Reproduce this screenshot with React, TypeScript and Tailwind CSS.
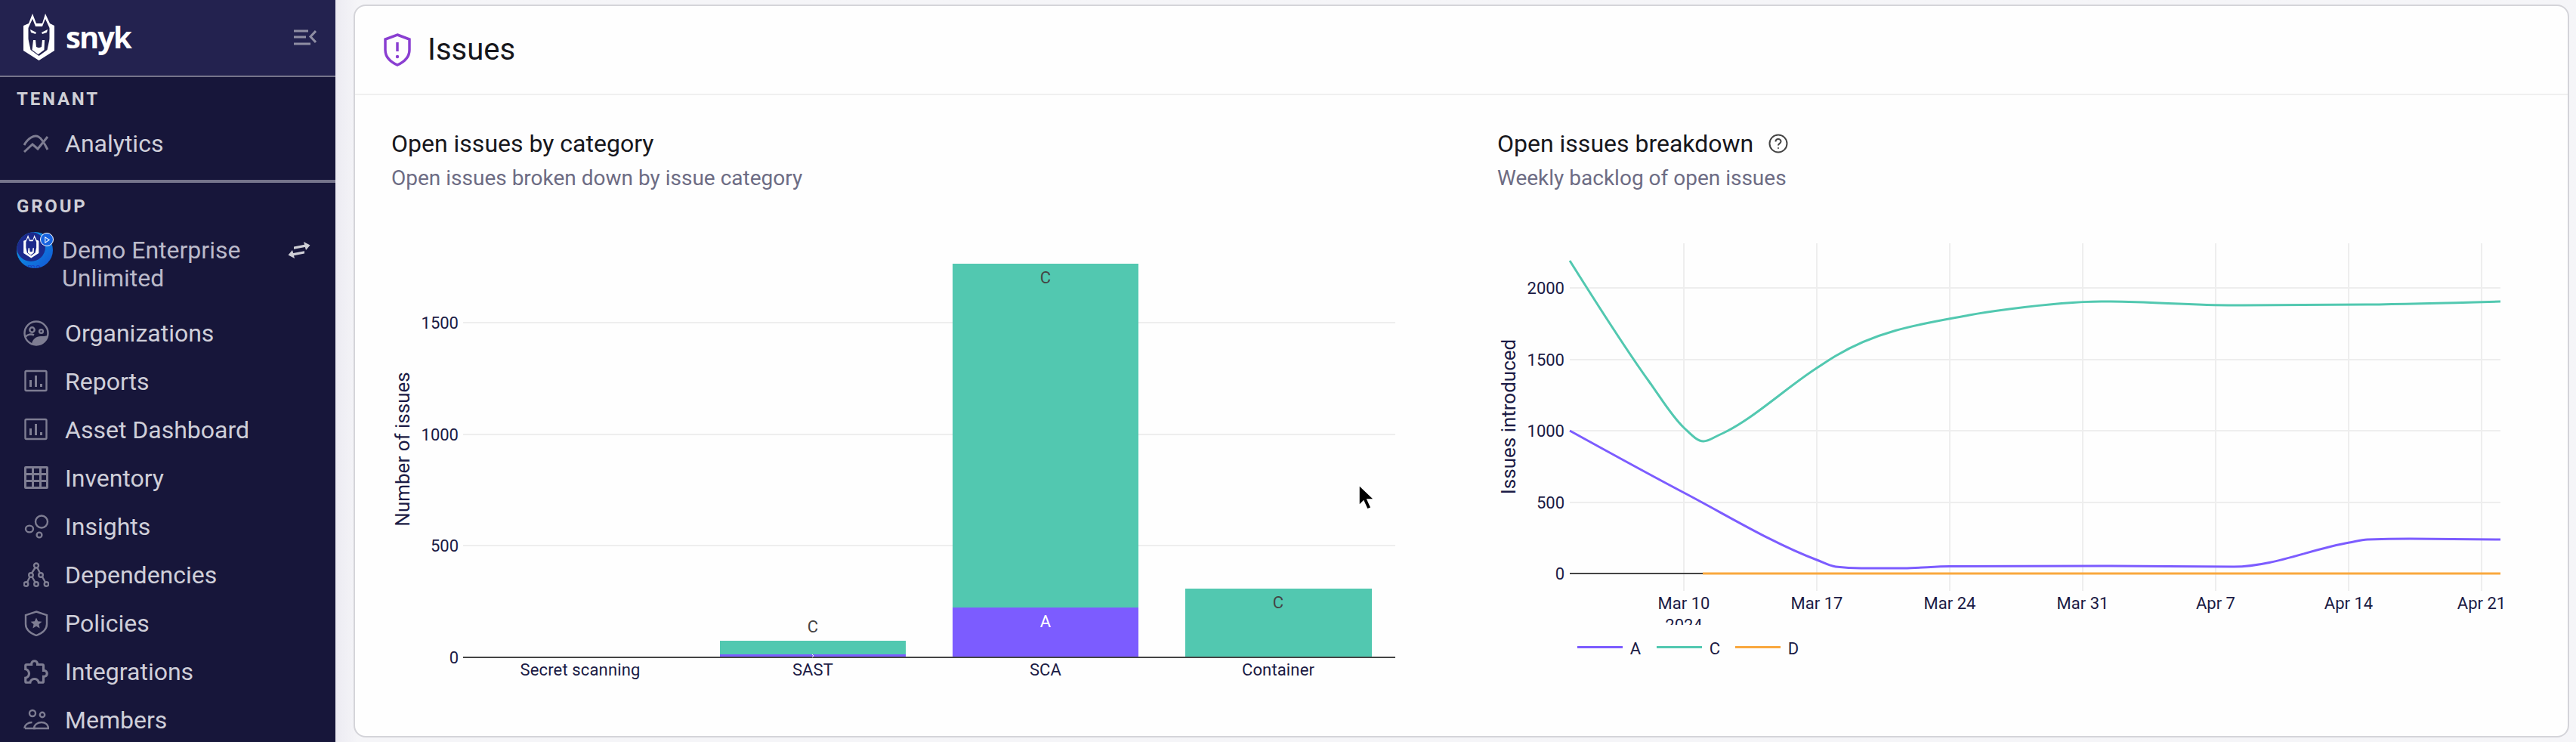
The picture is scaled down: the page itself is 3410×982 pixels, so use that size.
const TICK = "#1b1b45";
const GRID = "#eeeeee";
const AXIS = "#444444";
const PURPLE = "#7c5cff";
const TEAL = "#52c8b0";
const ORANGE = "#f9a83e";

type Pt = [number, number];

// same maths as d3 curveMonotoneX
function monotonePath(pts: Pt[]) {
  const n = pts.length;
  const slopes: number[] = [];
  for (let i = 0; i < n - 1; i++) {
    slopes.push((pts[i + 1][1] - pts[i][1]) / (pts[i + 1][0] - pts[i][0]));
  }
  const t: number[] = [];
  for (let i = 1; i < n - 1; i++) {
    const a = slopes[i - 1];
    const b = slopes[i];
    const ha = pts[i][0] - pts[i - 1][0];
    const hb = pts[i + 1][0] - pts[i][0];
    if (a * b <= 0) t[i] = 0;
    else {
      const p = (a * hb + b * ha) / (ha + hb);
      t[i] = (Math.sign(a) + Math.sign(b)) * Math.min(Math.abs(a), Math.abs(b), 0.5 * Math.abs(p));
    }
  }
  t[0] = (3 * slopes[0] - t[1]) / 2;
  t[n - 1] = (3 * slopes[n - 2] - t[n - 2]) / 2;
  let d = `M${pts[0][0]},${pts[0][1]}`;
  for (let i = 0; i < n - 1; i++) {
    const dx = (pts[i + 1][0] - pts[i][0]) / 3;
    d += `C${pts[i][0] + dx},${pts[i][1] + dx * t[i]} ${pts[i + 1][0] - dx},${pts[i + 1][1] - dx * t[i + 1]} ${pts[i + 1][0]},${pts[i + 1][1]}`;
  }
  return d;
}

const navItems = [
  { label: "Organizations", icon: <OrgIcon /> },
  { label: "Reports", icon: <ChartBoxIcon /> },
  { label: "Asset Dashboard", icon: <ChartBoxIcon /> },
  { label: "Inventory", icon: <TableIcon /> },
  { label: "Insights", icon: <InsightsIcon /> },
  { label: "Dependencies", icon: <DepsIcon /> },
  { label: "Policies", icon: <PolicyIcon /> },
  { label: "Integrations", icon: <PuzzleIcon /> },
  { label: "Members", icon: <MembersIcon /> },
];

function IconBox({ children }: { children: React.ReactNode }) {
  return (
    <svg viewBox="0 0 34 34" className="w-[34px] h-[34px] shrink-0 text-[#7e7d92]" fill="none" stroke="currentColor" strokeWidth="2.4">
      {children}
    </svg>
  );
}

function OrgIcon() {
  return (
    <IconBox>
      <circle cx="17" cy="17" r="15.5" />
      <circle cx="11.5" cy="12.5" r="3.2" />
      <circle cx="23.5" cy="14.5" r="2.4" />
      <path d="M2.5 22c3-3.5 8-4.5 11.5-2.5" />
      <path d="M11 31c1-6 6-10 12-10 3 0 6 0 9-1-1 6-5 12-14 13z" fill="currentColor" stroke="none" />
    </IconBox>
  );
}

function ChartBoxIcon() {
  return (
    <IconBox>
      <rect x="2.5" y="3" width="28" height="26" rx="1.5" />
      <path d="M9.5 24v-9M16.5 24V9M23.5 24v-4" strokeWidth="3" />
    </IconBox>
  );
}

function TableIcon() {
  return (
    <IconBox>
      <path
        fill="currentColor"
        stroke="none"
        fillRule="evenodd"
        d="M3 1h28a2 2 0 0 1 2 2v26a2 2 0 0 1-2 2H3a2 2 0 0 1-2-2V3a2 2 0 0 1 2-2zM4 4v6h7V4zM14 4v6h7V4zM24 4v6h6V4zM4 13v6h7v-6zM14 13v6h7v-6zM24 13v6h6v-6zM4 22v6h7v-6zM14 22v6h7v-6zM24 22v6h6v-6z"
      />
    </IconBox>
  );
}

function InsightsIcon() {
  return (
    <IconBox>
      <circle cx="24" cy="10.5" r="8" />
      <ellipse cx="8" cy="20" rx="5" ry="4.4" />
      <circle cx="21" cy="28" r="3.4" />
    </IconBox>
  );
}

function DepsIcon() {
  return (
    <IconBox>
      <circle cx="17" cy="4.5" r="3" />
      <circle cx="10" cy="17" r="2.8" />
      <circle cx="23" cy="17" r="2.8" />
      <circle cx="3.5" cy="29" r="2.8" />
      <circle cx="17" cy="29" r="2.8" />
      <circle cx="30.5" cy="29" r="2.8" />
      <path d="M15.5 7.5 11 14.5M18.5 7.5 22 14.5M8.5 19.5 5 26.5M11.5 19.5 15.5 26.5M25 19.5 29 26.5" />
    </IconBox>
  );
}

function PolicyIcon() {
  return (
    <IconBox>
      <path d="M17 1.5 31 6v12c0 7-6 12-14 15C9 30 3 25 3 18V6z" />
      <path d="M17 9.5l2.2 4.8 5.2.5-3.9 3.5 1.1 5.2-4.6-2.7-4.6 2.7 1.1-5.2-3.9-3.5 5.2-.5z" fill="currentColor" stroke="none" />
    </IconBox>
  );
}

function PuzzleIcon() {
  return (
    <svg viewBox="0 0 24 24" className="w-[38px] h-[38px] -ml-[2px] -mr-[2px] shrink-0 text-[#7e7d92]" fill="currentColor">
      <path d="M22,13.5C22,15.26 20.7,16.72 19,16.96V20A2,2 0 0,1 17,22H13.2V21.7A2.7,2.7 0 0,0 10.5,19C9,19 7.8,20.21 7.8,21.7V22H4A2,2 0 0,1 2,20V16.2H2.3C3.79,16.2 5,15 5,13.5C5,12 3.79,10.8 2.3,10.8H2V7A2,2 0 0,1 4,5H7.04C7.28,3.3 8.74,2 10.5,2C12.26,2 13.72,3.3 13.96,5H17A2,2 0 0,1 19,7V10.04C20.7,10.28 22,11.74 22,13.5M17,15H18.5A1.5,1.5 0 0,0 20,13.5A1.5,1.5 0 0,0 18.5,12H17V7H12V5.5A1.5,1.5 0 0,0 10.5,4A1.5,1.5 0 0,0 9,5.5V7H4V9.12C5.76,9.8 7,11.5 7,13.5C7,15.5 5.75,17.2 4,17.88V20H6.12C6.8,18.25 8.5,17 10.5,17C12.5,17 14.2,18.25 14.88,20H17V15Z" />
    </svg>
  );
}

function MembersIcon() {
  return (
    <IconBox>
      <circle cx="12" cy="8" r="4" />
      <circle cx="25" cy="10" r="3.2" />
      <path d="M1.5 28c0-5 5-8 10-8M16 28h-14" />
      <path d="M14 28c0-5 5-8 10-8 5 0 9 3 9 8z" />
    </IconBox>
  );
}

function SnykLogo() {
  return (
    <svg viewBox="31 17 42 63" className="w-[42px] h-[63px] shrink-0">
      <path d="M31 33l7-3 5-13 5 13h8l4-13 6 13 6 3v33l-20.500 13-20.500-13z" fill="#fff" />
      <path d="M37.500 36l5.500-12 4 10h9l4-10 5.500 12v15l-3 14-11 8-11-8-3-14z" fill="#23224f" />
      <path d="M40 38l8 4-1 2-6-2zM63 38l-8 4 1 2 6-2z" fill="#fff" />
      <path d="M44 52h3l1 9c2 1.500 5 1.500 7 0l1-9h3l-.5 13-8 6-8-6z" fill="#fff" />
      <path d="M31.500 40l5 2 1 14-3 10-3-2zM71.500 40l-5 2-1 14 3 10 3-2z" fill="#fff" />
    </svg>
  );
}

function Avatar() {
  return (
    <div className="relative w-12 h-12 shrink-0">
      <div className="absolute inset-0 rounded-full overflow-hidden bg-gradient-to-br from-[#17a3e6] to-[#1753d4]">
        <div className="absolute left-0 top-0 w-[38px] h-[39px] rounded-full bg-[#1c2a8c] flex items-center justify-center">
          <svg viewBox="31 17 42 63" className="w-[21px] h-[31px]">
            <path d="M31 33l7-3 5-13 5 13h8l4-13 6 13 6 3v33l-20.500 13-20.500-13z" fill="#fff" />
            <path d="M37.500 36l5.500-12 4 10h9l4-10 5.500 12v15l-3 14-11 8-11-8-3-14z" fill="#1c2a8c" />
            <path d="M44 52h3l1 9c2 1.500 5 1.500 7 0l1-9h3l-.5 13-8 6-8-6z" fill="#fff" />
          </svg>
        </div>
        <span className="absolute left-[8px] -bottom-[5px] text-[12px] leading-[12px] text-[#1a3fc0]">emo</span>
      </div>
      <div className="absolute -right-[1px] top-[1px] w-[18px] h-[18px] rounded-full bg-[#1763e0] border border-white flex items-center justify-center">
        <svg viewBox="0 0 10 10" className="w-[9px] h-[9px]" fill="none" stroke="#fff" strokeWidth="1.200">
          <path d="M2 1l6 4-6 4z" />
        </svg>
      </div>
    </div>
  );
}

function Sidebar() {
  return (
    <aside className="w-[444px] h-full shrink-0 bg-[#17163a] flex flex-col overflow-hidden font-['Roboto',sans-serif]">
      <div className="h-[102px] shrink-0 bg-[#23224f] border-b-2 border-[#75748b] flex items-center justify-between pl-[31px] pr-[25px] pb-[2px]">
        <div className="flex items-center gap-[14px]">
          <SnykLogo />
          <span className="text-[40px] leading-[44px] font-bold text-white font-['Open_Sans',sans-serif] tracking-[-2px]">snyk</span>
        </div>
        <svg viewBox="0 0 30 21" className="w-[30px] h-[21px]" fill="none" stroke="#8f8ea3" strokeWidth="3">
          <path d="M0 2h19M0 10h16M0 19h22M29 2l-7 7.500 7 7.500" />
        </svg>
      </div>

      <div className="h-[140px] shrink-0 border-b-4 border-[#75748b] pt-[15px]">
        <div className="pl-[22px] text-[24px] leading-7 font-bold tracking-[2.800px] text-[#cfcfd6]">TENANT</div>
        <div className="h-16 flex items-center gap-[21px] pl-[31px] mt-[13px]">
          <svg viewBox="0 0 34 24" className="w-[34px] h-[24px] shrink-0" fill="none" stroke="#7e7d92" strokeWidth="3">
            <path d="M1 14C6 5 14 0 20 3c4 2 8 9 12 17" />
            <path d="M1 23l11-10 7 6L32 3" />
          </svg>
          <span className="text-[32px] leading-10 text-[#cfcfd9]">Analytics</span>
        </div>
      </div>

      <div className="pl-[22px] pt-[17px] text-[24px] leading-7 font-bold tracking-[2.800px] text-[#cfcfd6]">GROUP</div>
      <div className="flex items-start pl-[22px] pr-[33px] mt-[20px]">
        <Avatar />
        <div className="ml-[12px] mt-[6px] flex-1 text-[32px] leading-[37px] text-[#bbbaca]">Demo Enterprise<br />Unlimited</div>
        <svg viewBox="0 0 30 22" className="w-[30px] h-[22px] mt-[13px] shrink-0" fill="#cfcfd6">
          <path d="M29.500 4.500 21 0l1 3.800L8 6.500v3.200l14.800-2.800L24 11zM.500 17.500 9 22l-1-3.800 14-2.700v-3.200L7.200 15.100 6 11z" />
        </svg>
      </div>

      <nav className="mt-[22px]">
        {navItems.map((item) => (
          <div key={item.label} className="h-16 flex items-center gap-[21px] pl-[31px]">
            {item.icon}
            <span className="text-[32px] leading-10 text-[#cfcfd9]">{item.label}</span>
          </div>
        ))}
      </nav>
    </aside>
  );
}

function BarChart() {
  const font = "Roboto, sans-serif";
  const yTicks: [string, number][] = [["1500", 427], ["1000", 575], ["500", 722], ["0", 870]];
  return (
    <svg width="1464" height="660" viewBox="470 300 1464 660" className="block" fontFamily={font} fontSize="22">
      {[427, 575, 722].map((y) => (
        <rect key={y} x="613" y={y - 1} width="1234" height="2" fill={GRID} />
      ))}
      {yTicks.map(([t, y]) => (
        <text key={t} x="607" y={y + 8} textAnchor="end" fill={TICK}>{t}</text>
      ))}
      <text transform="translate(542 594.500) rotate(-90)" textAnchor="middle" fontSize="26" fill={TICK}>Number of issues</text>

      <rect x="953" y="848" width="246" height="18" fill={TEAL} />
      <rect x="953" y="866" width="246" height="4" fill={PURPLE} />
      <rect x="1261" y="349" width="246" height="455" fill={TEAL} />
      <rect x="1261" y="804" width="246" height="66" fill={PURPLE} />
      <rect x="1569" y="779" width="247" height="91" fill={TEAL} />
      <rect x="613" y="869" width="1234" height="2" fill={AXIS} />

      <text x="1076" y="837" textAnchor="middle" fill={AXIS}>C</text>
      <text x="1384" y="375" textAnchor="middle" fill={AXIS}>C</text>
      <text x="1384" y="830" textAnchor="middle" fill="#ffffff">A</text>
      <text x="1692" y="805" textAnchor="middle" fill={AXIS}>C</text>
      <path d="M1075 866l2 2-2 2" stroke="#fff" strokeWidth="1" fill="none" />

      {[["Secret scanning", 768], ["SAST", 1076], ["SCA", 1384], ["Container", 1692]].map(([t, x]) => (
        <text key={t} x={x} y="894" textAnchor="middle" fill={TICK} letterSpacing="0.150">{t}</text>
      ))}

      <g>
        <path d="M1799 642v27l6-6 5 11 5-2-5-11h9z" fill="#000" stroke="#fff" strokeWidth="1.500" />
      </g>
    </svg>
  );
}

function LineChart() {
  const font = "Roboto, sans-serif";
  const teal: Pt[] = [
    [2078, 345], [2183, 505], [2229, 566], [2255, 584], [2275, 576], [2405, 487], [2430, 471],
    [2607, 417], [2660, 409], [2782, 399], [2958, 404], [3134, 403], [3310, 399],
  ];
  const purple: Pt[] = [
    [2078, 570], [2229, 652], [2405, 741], [2430, 750], [2464, 752], [2520, 752],
    [2581, 749.5], [2782, 749], [2957, 750], [3110, 718], [3134, 714], [3190, 713], [3310, 714],
  ];
  const ticks: [string, number][] = [
    ["Mar 10", 2229], ["Mar 17", 2405], ["Mar 24", 2581], ["Mar 31", 2757],
    ["Apr 7", 2933], ["Apr 14", 3109], ["Apr 21", 3285],
  ];
  const yTicks: [string, number][] = [["2000", 381], ["1500", 476], ["1000", 570], ["500", 665], ["0", 759]];
  const legend: [string, string, number][] = [["A", PURPLE, 2088], ["C", TEAL, 2193], ["D", ORANGE, 2297]];
  return (
    <svg width="1465" height="660" viewBox="1934 300 1465 660" className="block" fontFamily={font} fontSize="22">
      <defs>
        <clipPath id="tick-clip">
          <rect x="2078" y="782" width="1236" height="45" />
        </clipPath>
      </defs>
      {ticks.map(([t, x]) => (
        <rect key={t} x={x - 1} y="322" width="2" height="460" fill={GRID} />
      ))}
      {yTicks.slice(0, 4).map(([t, y]) => (
        <rect key={t} x="2078" y={y - 1} width="1232" height="2" fill={GRID} />
      ))}
      {yTicks.map(([t, y]) => (
        <text key={t} x="2071" y={y + 8} textAnchor="end" fill={TICK}>{t}</text>
      ))}
      <text transform="translate(2006 551.500) rotate(-90)" textAnchor="middle" fontSize="26" fill={TICK}>Issues introduced</text>

      <rect x="2078" y="758" width="176" height="2" fill={AXIS} />
      <rect x="2254" y="757.500" width="1056" height="3" fill={ORANGE} />
      <path d={monotonePath(purple)} fill="none" stroke={PURPLE} strokeWidth="3" />
      <path d={monotonePath(teal)} fill="none" stroke={TEAL} strokeWidth="3" />

      <g clipPath="url(#tick-clip)">
        {ticks.map(([t, x]) => (
          <text key={t} x={x} y="806" textAnchor="middle" fill={TICK}>{t}</text>
        ))}
        <text x="2229" y="835" textAnchor="middle" fill={TICK}>2024</text>
      </g>

      {legend.map(([t, c, x]) => (
        <g key={t}>
          <rect x={x} y="855" width="60" height="3" fill={c} />
          <text x={x + 77} y="866" textAnchor="middle" fill={TICK}>{t}</text>
        </g>
      ))}
    </svg>
  );
}

function ChartHead({ title, subtitle, help }: { title: string; subtitle: string; help?: boolean }) {
  return (
    <div className="pl-[48px] pt-[44px]">
      <div className="flex items-center h-10">
        <h3 className="text-[32px] leading-10 text-[#17171c]">{title}</h3>
        {help && (
          <svg viewBox="0 0 26 26" className="w-[26px] h-[26px] ml-[20px]" fill="none" stroke="#444" strokeWidth="2">
            <circle cx="13" cy="13" r="11.500" />
            <path d="M9.500 10.500c0-2 1.500-3.500 3.500-3.500s3.500 1.500 3.500 3.200c0 2.600-3.500 2.800-3.500 5.300" />
            <circle cx="13" cy="19" r="1" fill="#444" stroke="none" />
          </svg>
        )}
      </div>
      <p className="mt-2 text-[28px] leading-9 text-[#6d6c84]">{subtitle}</p>
    </div>
  );
}

export default function App() {
  return (
    <div className="w-[3410px] h-[982px] flex overflow-hidden bg-[#f5f5f8] font-['Roboto',sans-serif]">
      <Sidebar />
      <main className="flex-1 h-full pl-6 pr-[9px] pt-[6px] pb-[6px] bg-gradient-to-r from-[#ecebf2] to-[#f5f5f8] to-[1%]">
        <section className="h-full bg-[#fefefe] border-2 border-[#d4d4d9] rounded-2xl overflow-hidden">
          <header className="h-[118px] border-b-2 border-[#f0f0f0] flex items-center pl-[38px] gap-[22px]">
            <svg viewBox="0 0 36 44" className="w-9 h-11" fill="none" stroke="#8a3fd1" strokeWidth="3.500">
              <path d="M18 2 34 8v14c0 10-7 16-16 20C9 38 2 32 2 22V8z" />
              <path d="M18 12v12" />
              <circle cx="18" cy="31" r="2.200" fill="#8a3fd1" stroke="none" />
            </svg>
            <h2 className="text-[40px] leading-[48px] text-[#17171c]">Issues</h2>
          </header>
          <div className="grid grid-cols-[1464px_1465px]">
            <div>
              <ChartHead title="Open issues by category" subtitle="Open issues broken down by issue category" />
              <div className="mt-[46px]"><BarChart /></div>
            </div>
            <div>
              <ChartHead title="Open issues breakdown" subtitle="Weekly backlog of open issues" help />
              <div className="mt-[46px]"><LineChart /></div>
            </div>
          </div>
        </section>
      </main>
    </div>
  );
}
